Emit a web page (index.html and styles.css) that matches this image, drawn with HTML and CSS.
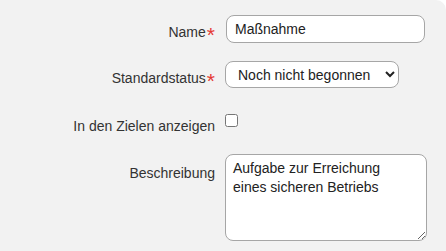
FILE: index.html
```html
<!DOCTYPE html>
<html lang="de">
<head>
  <meta charset="UTF-8" />
  <meta name="viewport" content="width=device-width, initial-scale=1.0" />
  <title>Maßnahme bearbeiten</title>
  <link rel="stylesheet" href="styles.css">
</head>
<body>
  <form class="panel">
    <!-- Name -->
    <div class="row row-name">
      <label class="label" for="name">Name<span class="req">*</span></label>
      <input class="field" id="name" type="text" value="Maßnahme" />
    </div>

    <!-- Standardstatus -->
    <div class="row row-status">
      <label class="label" for="status">Standardstatus<span class="req">*</span></label>
      <select class="select" id="status">
        <option>Noch nicht begonnen</option>
        <option>In Bearbeitung</option>
        <option>Abgeschlossen</option>
      </select>
    </div>

    <!-- In den Zielen anzeigen -->
    <div class="row row-check">
      <label class="label" for="show">In den Zielen anzeigen</label>
      <input class="check" id="show" type="checkbox" />
    </div>

    <!-- Beschreibung -->
    <div class="row row-desc">
      <label class="label" for="desc">Beschreibung</label>
      <textarea class="area" id="desc">Aufgabe zur Erreichung eines sicheren Betriebs</textarea>
    </div>
  </form>
</body>
</html>
```

FILE: styles.css
```css
:root {
  --panel: #f2f2f2;
  --text: #333333;
  --input-text: #222222;
  --border: #a6a6a6;
  --required: #e53935;
}

body {
  margin: 0;
  background: white;
  font-family: 'Liberation Sans', Arial, sans-serif;
  font-size: 14px;
  color: var(--text);
}

.panel {
  background: var(--panel);
  min-height: 100vh;
  box-sizing: border-box;
  padding-top: 15px;
  border-top-right-radius: 10px;
}

.row {
  display: flex;
  align-items: flex-start;
  gap: 10px;
}

.row-name { margin-bottom: 18px; }
.row-status { margin-bottom: 26px; }
.row-check { margin-bottom: 20px; }

.label {
  width: 215px;
  flex: none;
  text-align: right;
  line-height: 16px;
  padding-top: 9px;
}

.row-check .label {
  padding-top: 4px;
}

.row-desc .label {
  padding-top: 11px;
}

/* red star after required labels */
.req {
  color: var(--required);
  font-size: 21px;
  line-height: 0;
  margin-left: 1px;
  vertical-align: -5px;
}

.field,
.select,
.area {
  font-family: 'Liberation Sans', Arial, sans-serif;
  font-size: 14px;
  color: var(--input-text);
  background: white;
  border: 1px solid var(--border);
  border-radius: 8px;
  box-sizing: border-box;
}

.field {
  width: 199px;
  height: 28px;
  padding: 0 8px;
  margin-left: 1px;
}

.select {
  width: 174px;
  height: 27px;
  padding: 0 6px 0 8px;
}

.check {
  width: 13px;
  height: 13px;
  margin: 0;
}

.area {
  width: 202px;
  height: 87px;
  padding: 4px 24px 4px 7px;
  line-height: 19px;
  resize: both;
}
```
